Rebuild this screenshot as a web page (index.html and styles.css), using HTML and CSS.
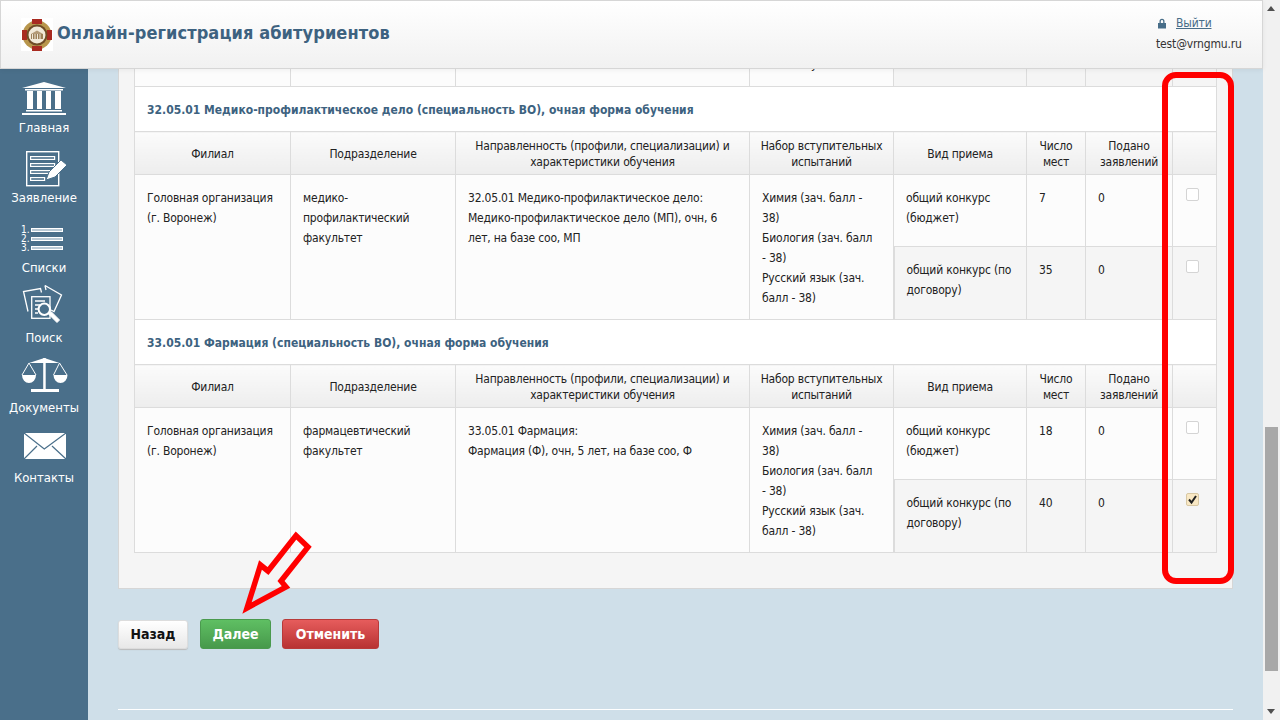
FILE: index.html
```html
<!DOCTYPE html>
<html lang="ru">
<head>
  <meta charset="UTF-8">
  <title>Онлайн-регистрация абитуриентов</title>
  <link rel="stylesheet" href="styles.css">
</head>
<body>
  <div class="page">
    <header class="topbar">
      <div class="brand">
        <svg class="logo" width="32" height="33" viewBox="0 0 32 33">
          <rect width="32" height="33" fill="#fff"/>
          <circle cx="16" cy="17" r="14.500" fill="#b8964c"/>
          <rect x="11" y="1" width="10" height="5" fill="#a92a20"/>
          <rect x="11" y="28" width="10" height="5" fill="#a92a20"/>
          <rect x="1" y="12" width="5" height="10" fill="#a92a20"/>
          <rect x="26" y="12" width="5" height="10" fill="#a92a20"/>
          <circle cx="16" cy="17" r="10.500" fill="#6e4c26"/>
          <circle cx="16" cy="17" r="8.500" fill="#f1e9d8"/>
          <path d="M10 16h12v5H10z" fill="#9c8058"/>
          <path d="M11.500 16v5M14 16v5M16.500 16v5M19 16v5" stroke="#f1e9d8"/>
          <path d="M10 16 16 12.500 22 16z" fill="#b39a76"/>
        </svg>
        <span class="brand-title">Онлайн-регистрация абитуриентов</span>
      </div>
      <div class="user">
        <div class="logout">
          <svg width="10" height="11" viewBox="0 0 10 11"><path d="M2.500 5V3.200a2.500 2.500 0 0 1 5 0V5H6.200V3.200a1.200 1.200 0 0 0-2.400 0V5z" fill="#476d88"/><rect x="1" y="5" width="8" height="5.500" fill="#476d88"/></svg>
          <a href="#">Выйти</a>
        </div>
        <div class="email">test@vrngmu.ru</div>
      </div>
    </header>

    <div class="layout">
      <nav class="sidebar">
        <a class="nav-item" href="#">
          <svg width="48" height="46" viewBox="0 0 48 46" fill="#fff">
            <path d="M24 9 46 15H2z"/>
            <rect x="5" y="16" width="38" height="1.500"/>
            <rect x="7" y="18" width="6" height="18"/><rect x="17" y="18" width="5" height="18"/><rect x="26" y="18" width="5" height="18"/><rect x="35" y="18" width="6" height="18"/>
            <rect x="6" y="37" width="36" height="1.500"/>
            <rect x="2" y="40" width="44" height="2"/>
          </svg>
          <span>Главная</span>
        </a>
        <a class="nav-item" href="#">
          <svg width="48" height="46" viewBox="0 0 48 46">
            <rect x="6.700" y="8.700" width="32" height="34" fill="none" stroke="#fff" stroke-width="1.400"/>
            <g fill="none" stroke="#fff" stroke-width="1.200"><rect x="10.600" y="13.600" width="24" height="2.800"/><rect x="10.600" y="20.600" width="24" height="2.800"/><rect x="10.600" y="27.600" width="19" height="2.800"/><rect x="10.600" y="34.600" width="14" height="2.800"/></g>
            <path d="M26 37 29 29 41 17 47 22 35 34z" fill="#fff" stroke="#4a6f8a"/>
          </svg>
          <span>Заявление</span>
        </a>
        <a class="nav-item" href="#">
          <svg width="48" height="46" viewBox="0 0 48 46">
            <text x="1" y="20" class="nav-num">1.</text><text x="1" y="29" class="nav-num">2.</text><text x="1" y="38" class="nav-num">3.</text>
            <g fill="#b9c9d5" stroke="#fff"><rect x="11.500" y="15.500" width="31" height="3"/><rect x="11.500" y="24.500" width="31" height="3"/><rect x="11.500" y="33.500" width="31" height="3"/></g>
          </svg>
          <span>Списки</span>
        </a>
        <a class="nav-item" href="#">
          <svg width="48" height="46" viewBox="0 0 48 46" fill="none" stroke="#fff" stroke-width="1.300">
            <path d="M8 28.500 3.500 8.500 20.500 5.500 21.500 9.500"/>
            <path d="M25 2.500 41.500 12 34 28.500 31 27"/>
            <path d="M26 7 25 2.500"/>
            <rect x="11.700" y="13.700" width="18.300" height="21.600"/>
            <path d="M15 18h10M15 22h5M15 26h3M15 30h3"/>
            <circle cx="24.300" cy="26.300" r="5.700" fill="#4a6f8a" stroke-width="2"/>
            <path d="M28.500 31 37 39.500 39.500 37 31 28.500" fill="#fff" stroke-width="1"/>
          </svg>
          <span>Поиск</span>
        </a>
        <a class="nav-item" href="#">
          <svg width="48" height="46" viewBox="0 0 48 46" fill="#fff">
            <path d="M9 10 24.300 5 39.500 10z"/>
            <rect x="23.200" y="5" width="2.500" height="31"/>
            <rect x="11" y="36" width="28" height="3"/>
            <path d="M9 10 2 22M9 10 16 22M39.500 10 33.500 22M39.500 10 47 22" fill="none" stroke="#fff"/>
            <path d="M2 22H16A7 8 0 0 1 2 22zM33.500 22H47.500A7 8 0 0 1 33.500 22z"/>
          </svg>
          <span>Документы</span>
        </a>
        <a class="nav-item" href="#">
          <svg width="48" height="46" viewBox="0 0 48 46">
            <rect x="4" y="10" width="42" height="26" fill="#fff"/>
            <path d="M4 10 24.300 26 46 10M4 36 17 23M46 36 32 23" fill="none" stroke="#4a6f8a" stroke-width="1.200"/>
          </svg>
          <span>Контакты</span>
        </a>
      </nav>

      <main class="content">
        <div class="panel">
          <table class="spec-table">
            <colgroup>
              <col class="c1"><col class="c2"><col class="c3"><col class="c4"><col class="c5"><col class="c6"><col class="c7"><col class="c8">
            </colgroup>
            <tr class="cut-row">
              <td></td><td></td><td></td><td><div class="cut-text"><span>у</span></div></td><td class="grey"></td><td class="grey"></td><td class="grey"></td><td class="grey"></td>
            </tr>
            <tr>
              <td class="spec-name" colspan="8">32.05.01 Медико-профилактическое дело (специальность ВО), очная форма обучения</td>
            </tr>
            <tr class="head-row">
              <th>Филиал</th><th>Подразделение</th><th>Направленность (профили, специализации) и характеристики обучения</th><th>Набор вступительных испытаний</th><th>Вид приема</th><th>Число мест</th><th>Подано заявлений</th><th></th>
            </tr>
            <tr class="row-a">
              <td rowspan="2">Головная организация (г. Воронеж)</td>
              <td rowspan="2">медико-профилактический факультет</td>
              <td rowspan="2">32.05.01 Медико-профилактическое дело:<br>Медико-профилактическое дело (МП), очн, 6 лет, на базе соо, МП</td>
              <td rowspan="2" class="exams">Химия (зач. балл - 38)<br>Биология (зач. балл - 38)<br>Русский язык (зач. балл - 38)</td>
              <td>общий конкурс (бюджет)</td><td>7</td><td>0</td>
              <td class="check-cell"><span class="check"></span></td>
            </tr>
            <tr class="row-b">
              <td>общий конкурс (по договору)</td><td>35</td><td>0</td>
              <td class="check-cell"><span class="check"></span></td>
            </tr>
            <tr>
              <td class="spec-name" colspan="8">33.05.01 Фармация (специальность ВО), очная форма обучения</td>
            </tr>
            <tr class="head-row">
              <th>Филиал</th><th>Подразделение</th><th>Направленность (профили, специализации) и характеристики обучения</th><th>Набор вступительных испытаний</th><th>Вид приема</th><th>Число мест</th><th>Подано заявлений</th><th></th>
            </tr>
            <tr class="row-a">
              <td rowspan="2">Головная организация (г. Воронеж)</td>
              <td rowspan="2">фармацевтический факультет</td>
              <td rowspan="2">33.05.01 Фармация:<br>Фармация (Ф), очн, 5 лет, на базе соо, Ф</td>
              <td rowspan="2" class="exams">Химия (зач. балл - 38)<br>Биология (зач. балл - 38)<br>Русский язык (зач. балл - 38)</td>
              <td>общий конкурс (бюджет)</td><td>18</td><td>0</td>
              <td class="check-cell"><span class="check"></span></td>
            </tr>
            <tr class="row-b">
              <td>общий конкурс (по договору)</td><td>40</td><td>0</td>
              <td class="check-cell"><span class="check checked">
                <svg width="11" height="11" viewBox="0 0 11 11"><path d="M2 5.500 4.500 8.500 9 2" fill="none" stroke="#222" stroke-width="2"/></svg>
              </span></td>
            </tr>
          </table>
        </div>

        <div class="actions">
          <button class="btn btn-back">Назад</button>
          <button class="btn btn-next">Далее</button>
          <button class="btn btn-cancel">Отменить</button>
        </div>
        <div class="footer-line"></div>

        <div class="red-frame"></div>
        <svg class="red-arrow" width="76" height="86" viewBox="0 0 76 86">
          <path d="M8 77 21.500 34 29 40 57 4.500 69 16 42 50 47 56z" fill="none" stroke="#f00" stroke-width="5.500"/>
        </svg>
      </main>

      <div class="scrollbar">
        <span class="arrow-up"></span>
        <div class="thumb"></div>
        <span class="arrow-down"></span>
      </div>
    </div>
  </div>
</body>
</html>
```

FILE: styles.css
```css
* { box-sizing: border-box; }
html, body { margin: 0; height: 100%; overflow: hidden; }
body { font-family: "DejaVu Sans Condensed", "DejaVu Sans", sans-serif; font-stretch: condensed; font-size: 12px; color: #222; background: #cfdfe9; }
a { color: #476d88; }

.page { height: 720px; position: relative; }

.topbar {
  position: absolute; left: 0; top: 0; z-index: 5;
  width: 1263px; height: 69px;
  display: flex; justify-content: space-between;
  background: linear-gradient(#ffffff, #f1f1f1);
  border: 1px solid #d6d6d6;
  box-shadow: 0 1px 5px rgba(0, 0, 0, .06);
}
.brand { display: flex; align-items: center; padding-left: 20px; }
.logo { margin-top: -1px; }
.brand-title { margin: -5px 0 0 4px; font-size: 18px; font-weight: bold; letter-spacing: .1px; color: #3d6280; }
.user { width: 106px; padding-top: 15px; letter-spacing: -.15px; }
.logout { display: flex; align-items: center; gap: 9px; height: 14px; margin-left: 1px; }
.email { margin-top: 7px; color: #333; }

.layout { display: flex; height: 720px; }

.sidebar { width: 88px; flex: none; background: #4a6f8a; padding-top: 69px; }
.nav-item { display: flex; flex-direction: column; align-items: flex-start; height: 70px; padding: 4px 0 0 20px; color: #fff; text-decoration: none; }
.nav-item svg { display: block; }
.nav-item span { width: 48px; margin: 1px 0 0 0; font-size: 13px; line-height: 15px; white-space: nowrap; display: flex; justify-content: center; }
.nav-num { font-size: 10px; fill: #fff; }

.content { flex: 1; position: relative; padding: 69px 30px 0; overflow: hidden; }

.panel { width: 1115px; height: 520px; background: #f5f5f5; border: 1px solid #d6d6d6; border-top: 0; padding: 0 15px; }

.spec-table { width: 1082px; table-layout: fixed; border-collapse: collapse; background: #fcfcfc; }
.spec-table td, .spec-table th { border: 1px solid #dcdcdc; padding: 13px 12px 11px; vertical-align: top; line-height: 20px; font-weight: normal; letter-spacing: -.2px; }
.c1 { width: 156px; } .c2 { width: 165px; } .c3 { width: 294px; } .c4 { width: 144px; }
.c5 { width: 133px; } .c6 { width: 59px; } .c7 { width: 87px; } .c8 { width: 44px; }

.spec-table .cut-row td { padding: 0; height: 17px; border-top: 0; background: #fcfcfc; }
.spec-table .cut-row td.grey { background: #f5f5f5; }
.cut-text { height: 17px; overflow: hidden; }
.cut-text span { display: block; margin-top: -15px; padding-left: 61px; }

.spec-table .spec-name { font-weight: bold; letter-spacing: 0; color: #3d6280; background: #fff; height: 45px; padding: 2px 12px 0; vertical-align: middle; }
.spec-table .head-row th { height: 43px; padding: 6px 6px 4px; line-height: 16px; text-align: center; vertical-align: middle; background: linear-gradient(#fbfbfb, #ededed); }
.row-a td { height: 72px; }
.row-b td { height: 73px; background: #f5f5f5; }
.spec-table .exams { padding-right: 17px; }
.spec-table .row-b td:first-child { padding-left: 12px; border-left: 2px solid #dcdcdc; }

.spec-table .check-cell { padding: 13px 0 0 13px; line-height: 0; }
.check { display: inline-block; width: 13px; height: 13px; background: #fff; border: 1px solid #d4d4d4; border-radius: 2px; }
.check.checked { background: #f9e8c4; border-color: #d8c8a4; }
.check svg { display: block; }

.actions { display: flex; align-items: center; gap: 12px; margin-top: 30px; }
.btn { height: 30px; padding: 0; font-family: inherit; font-stretch: condensed; font-size: 14px; font-weight: bold; border-radius: 3px; }
.btn-back { width: 70px; height: 29px; color: #111; background: linear-gradient(#fff, #e8e8e8); border: 1px solid #ddd; box-shadow: 0 1px 1px #bbb; }
.btn-next { width: 71px; color: #fff; background: linear-gradient(#5fbf63, #47994b); border: 1px solid #4a9a4e; }
.btn-cancel { width: 97px; margin-left: -1px; color: #fff; background: linear-gradient(#e65c5c, #b83232); border: 1px solid #b83a3a; }

.footer-line { height: 1px; width: 1115px; background: #fff; margin-top: 60px; }

.red-frame { position: absolute; left: 1074px; top: 72px; width: 72px; height: 512px; border: 6px solid #f00; border-radius: 14px; }
.red-arrow { position: absolute; left: 151px; top: 531px; }

.scrollbar { width: 17px; flex: none; background: #f1f1f1; position: relative; }
.thumb { position: absolute; left: 2px; top: 427px; width: 13px; height: 244px; background: #a8a8a8; }
.arrow-up { position: absolute; left: 4px; top: 6px; border: 4px solid transparent; border-top: 0; border-bottom: 5px solid #505050; }
.arrow-down { position: absolute; left: 4px; top: 709px; border: 4px solid transparent; border-bottom: 0; border-top: 5px solid #505050; }
```
